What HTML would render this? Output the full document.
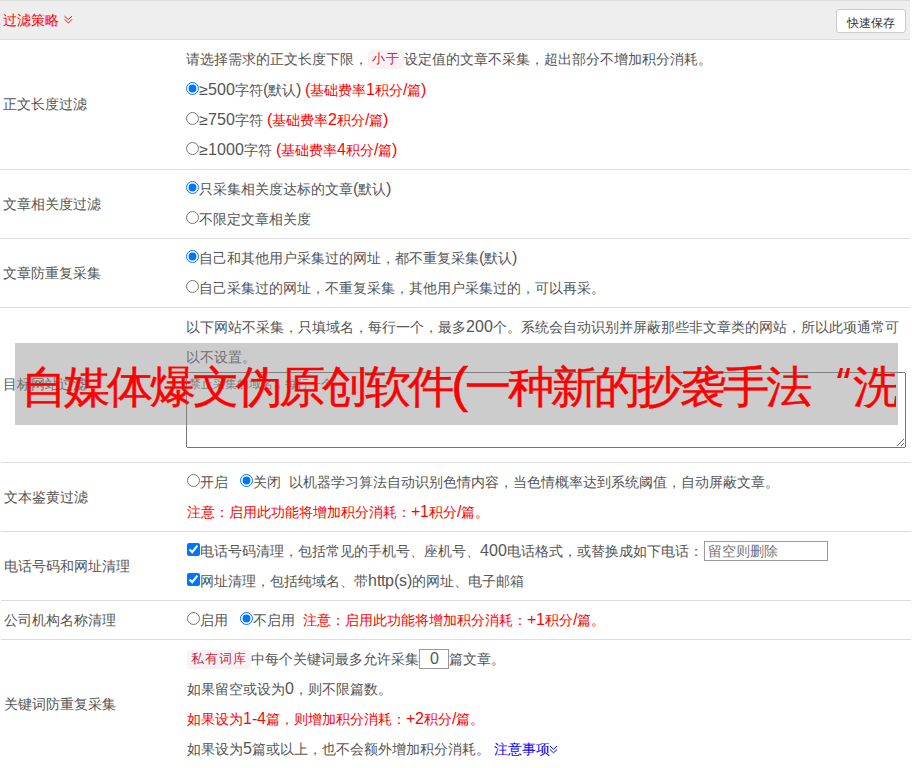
<!DOCTYPE html>
<html><head><meta charset="utf-8">
<style>
@font-face{font-family:"LSx";src:local("Liberation Sans"),local("LiberationSans");unicode-range:U+0020-007E,U+00A0-00FF,U+2265;size-adjust:111%;}
html,body{margin:0;padding:0;}
body{width:912px;height:768px;overflow:hidden;position:relative;background:#fff;font-family:"LSx","Liberation Sans",sans-serif;font-size:14px;color:#555;}
.hr{position:absolute;left:0;width:910px;height:1px;background:#ddd;}
.hdr{position:absolute;left:0;top:0;width:910px;height:39px;background:#eee;}
.ttl{position:absolute;left:3px;top:5px;line-height:30px;color:#f00;white-space:nowrap;}
.btn{position:absolute;left:836px;top:9px;width:68px;height:22px;border:1px solid #ccc;border-radius:3px;background:#fff;font-size:12px;color:#333;text-align:center;line-height:25px;overflow:hidden;box-sizing:content-box;}
.lbl{position:absolute;left:3px;line-height:20px;white-space:nowrap;}
.ln{position:absolute;left:186px;line-height:30px;height:30px;white-space:nowrap;}
input[type=radio]{margin:0;width:13px;height:13px;vertical-align:0;}
input[type=checkbox]{margin:0;width:13px;height:13px;vertical-align:0;}
.red{color:#f00;}
.blue{color:#00f;}
code{vertical-align:1px;font-weight:300;font-family:"Liberation Mono",monospace;font-size:13px;letter-spacing:1px;color:#c7254e;background:#f9f2f4;border-radius:4px;padding:2px 4px;}
.ov{position:absolute;left:15px;top:343px;width:883px;height:82px;background:rgba(142,142,142,0.45);overflow:hidden;}
.ovt{position:absolute;left:6px;top:3px;width:875px;overflow:hidden;transform:scaleY(0.95);transform-origin:0 21px;line-height:82px;font-size:46px;letter-spacing:-3px;-webkit-text-stroke:0.4px #f00;color:#f00;white-space:nowrap;}
.sp{display:inline-block;}
::placeholder{color:#757575;opacity:1;}
</style></head><body>
<div class="hdr"></div>
<div class="hr" style="top:0"></div>
<div class="hr" style="top:39px"></div>
<div class="ttl">过滤策略</div>
<svg style="position:absolute;left:63px;top:15px" width="10" height="10" viewBox="0 0 10 10"><path d="M1.5 1.2 L5.3 4.5 L9 1.2 M1.5 4.3 L5.3 8 L9 4.3" fill="none" stroke="#f00" stroke-width="0.95"/></svg>
<div class="btn">快速保存</div>

<div class="hr" style="top:169px"></div>
<div class="hr" style="top:238px"></div>
<div class="hr" style="top:307px"></div>
<div class="hr" style="top:462px;left:1px"></div>
<div class="hr" style="top:531px;left:1px"></div>
<div class="hr" style="top:600px;left:1px"></div>
<div class="hr" style="top:639px;left:1px"></div>

<!-- row1 -->
<div class="lbl" style="top:94px">正文长度过滤</div>
<div class="ln" style="top:43px;height:31px;line-height:31px">请选择需求的正文长度下限，<code>小于</code>设定值的文章不采集，超出部分不增加积分消耗。</div>
<div class="ln" style="top:75px"><input type="radio" checked>≥500字符(默认) <span class="red">(基础费率1积分/篇)</span></div>
<div class="ln" style="top:105px"><input type="radio">≥750字符 <span class="red">(基础费率2积分/篇)</span></div>
<div class="ln" style="top:135px"><input type="radio">≥1000字符 <span class="red">(基础费率4积分/篇)</span></div>

<!-- row2 -->
<div class="lbl" style="top:194px">文章相关度过滤</div>
<div class="ln" style="top:174px"><input type="radio" checked>只采集相关度达标的文章(默认)</div>
<div class="ln" style="top:204px"><input type="radio">不限定文章相关度</div>

<!-- row3 -->
<div class="lbl" style="top:263px">文章防重复采集</div>
<div class="ln" style="top:243px"><input type="radio" checked>自己和其他用户采集过的网址，都不重复采集(默认)</div>
<div class="ln" style="top:273px"><input type="radio">自己采集过的网址，不重复采集，其他用户采集过的，可以再采。</div>

<!-- row4 -->
<div class="lbl" style="top:374px">目标网站过滤</div>
<div class="ln" style="top:312px">以下网站不采集，只填域名，每行一个，最多200个。系统会自动识别并屏蔽那些非文章类的网站，所以此项通常可</div>
<div class="ln" style="top:342px">以不设置。</div>
<textarea style="position:absolute;left:186px;top:372px;width:720px;height:76px;box-sizing:border-box;margin:0;font-family:'LSx','Liberation Sans',sans-serif;font-size:12px;padding:3px 2px;" placeholder="禁止采集的域名，每行一个"></textarea>

<!-- row5 -->
<div class="lbl" style="left:4px;top:487px">文本鉴黄过滤</div>
<div class="ln" style="left:187px;top:467px"><input type="radio">开启<span class="sp" style="width:12px"></span><input type="radio" checked>关闭<span class="sp" style="width:8px"></span>以机器学习算法自动识别色情内容，当色情概率达到系统阈值，自动屏蔽文章。</div>
<div class="ln red" style="left:187px;top:497px">注意：启用此功能将增加积分消耗：+1积分/篇。</div>

<!-- row6 -->
<div class="lbl" style="left:4px;top:556px">电话号码和网址清理</div>
<div class="ln" style="left:187px;top:536px"><input type="checkbox" checked>电话号码清理，包括常见的手机号、座机号、400电话格式，或替换成如下电话：</div>
<input type="text" placeholder="留空则删除" style="position:absolute;left:704px;top:541px;width:124px;height:20px;box-sizing:border-box;margin:0;border:1px solid #999;padding:0 3px;font-family:'LSx','Liberation Sans',sans-serif;font-size:14px;">
<div class="ln" style="left:187px;top:566px"><input type="checkbox" checked>网址清理，包括纯域名、带http(s)的网址、电子邮箱</div>

<!-- row7 -->
<div class="lbl" style="left:4px;top:610px">公司机构名称清理</div>
<div class="ln" style="left:187px;top:605px"><input type="radio">启用<span class="sp" style="width:12px"></span><input type="radio" checked>不启用<span class="sp" style="width:8px"></span><span class="red">注意：启用此功能将增加积分消耗：+1积分/篇。</span></div>

<!-- row8 -->
<div class="lbl" style="left:4px;top:694px">关键词防重复采集</div>
<div class="ln" style="left:187px;top:644px"><code>私有词库</code>中每个关键词最多允许采集<span class="sp" style="width:30px"></span>篇文章。</div>
<input type="text" value="0" style="position:absolute;left:419px;top:649px;width:30px;height:20px;box-sizing:border-box;margin:0;border:1px solid #999;padding:0;text-align:center;color:#555;font-family:'LSx','Liberation Sans',sans-serif;font-size:14px;">
<div class="ln" style="left:187px;top:674px">如果留空或设为0，则不限篇数。</div>
<div class="ln red" style="left:187px;top:704px">如果设为1-4篇，则增加积分消耗：+2积分/篇。</div>
<div class="ln" style="left:187px;top:734px">如果设为5篇或以上，也不会额外增加积分消耗。 <span class="blue">注意事项</span></div>
<svg style="position:absolute;left:549px;top:745px" width="9" height="10" viewBox="0 0 9 10"><path d="M1 1 L4.5 4.3 L8 1 M1 4.5 L4.5 7.8 L8 4.5" fill="none" stroke="#00f" stroke-width="1"/></svg>

<div class="ov"><div class="ovt">自媒体爆文伪原创软件(一种新的抄袭手法<span class="sp" style="width:44px"></span>洗稿”)</div><svg style="position:absolute;left:821px;top:24px" width="15" height="12" viewBox="0 0 15 12"><path d="M4 1H7L5 11H1Z M11 1H14L12 11H8Z" fill="#f00"/></svg></div>
</body></html>
